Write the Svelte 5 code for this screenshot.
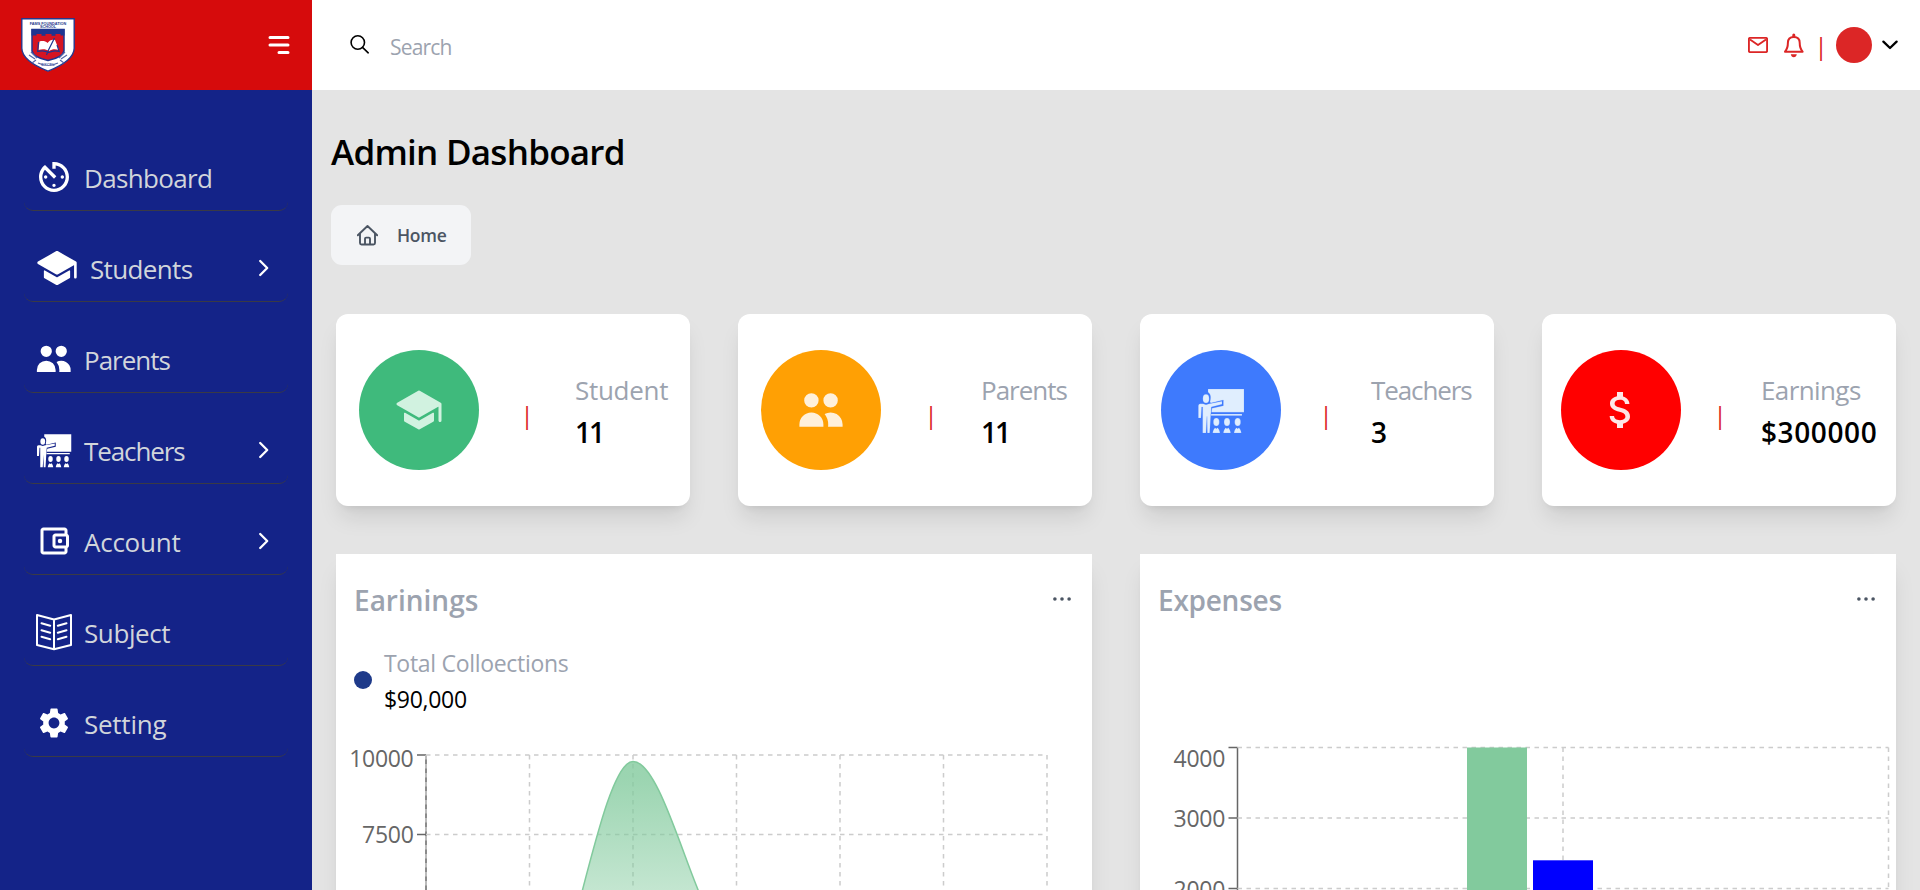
<script>
  const nav = [
    { label: 'Dashboard', icon: 'timer' },
    { label: 'Students', icon: 'school', more: true },
    { label: 'Parents', icon: 'users' },
    { label: 'Teachers', icon: 'teacher', more: true },
    { label: 'Account', icon: 'wallet', more: true },
    { label: 'Subject', icon: 'book' },
    { label: 'Setting', icon: 'gear' }
  ];
  const stats = [
    { label: 'Student', value: '11', icon: 'school', kind: 'green' },
    { label: 'Parents', value: '11', icon: 'users', kind: 'orange' },
    { label: 'Teachers', value: '3', icon: 'teacher', kind: 'blue' },
    { label: 'Earnings', value: '$300000', icon: 'dollar', kind: 'red' }
  ];
  const monthLines = [426, 529.5, 633, 736.5, 840, 943.5, 1047];
</script>

{#snippet icon(name)}
  {#if name === 'timer'}
    <svg class="ic timer" viewBox="0 0 24 24"><path d="M11 17c0 .55.45 1 1 1s1-.45 1-1-.45-1-1-1-1 .45-1 1zm0-14v4h2V5.08c3.39.49 6 3.39 6 6.92 0 3.87-3.13 7-7 7s-7-3.13-7-7c0-1.68.59-3.22 1.58-4.42L12 13l1.41-1.41-6.8-6.8v.02C4.42 6.45 3 9.05 3 12c0 4.97 4.02 9 9 9 4.97 0 9-4.03 9-9s-4.03-9-9-9h-1zm7 9c0-.55-.45-1-1-1s-1 .45-1 1 .45 1 1 1 1-.45 1-1zM6 12c0 .55.45 1 1 1s1-.45 1-1-.45-1-1-1-1 .45-1 1z" /></svg>
  {:else if name === 'school'}
    <svg class="ic school" viewBox="0 0 512 512"><path d="M256 368a16 16 0 0 1-7.94-2.11L108 285.84a8 8 0 0 0-12 6.94V368a16 16 0 0 0 8.23 14l144 80a16 16 0 0 0 15.54 0l144-80A16 16 0 0 0 416 368v-75.22a8 8 0 0 0-12-6.94l-140.06 80.05A16 16 0 0 1 256 368z" /><path d="M495.92 190.5v-.11a16 16 0 0 0-8-12.28l-224-128a16 16 0 0 0-15.88 0l-224 128a16 16 0 0 0 0 27.78l224 128a16 16 0 0 0 15.88 0L461 221.28a2 2 0 0 1 3 1.74v144.53c0 8.61 6.62 16 15.23 16.43A16 16 0 0 0 496 368V192a14.76 14.76 0 0 0-.08-1.5z" /></svg>
  {:else if name === 'users'}
    <svg class="ic users" viewBox="0 0 20 20"><path d="M9 6a3 3 0 11-6 0 3 3 0 016 0zM17 6a3 3 0 11-6 0 3 3 0 016 0zM12.93 17c.046-.327.07-.66.07-1a6.97 6.97 0 00-1.5-4.33A5 5 0 0119 16v1h-6.07zM6 11a5 5 0 015 5v1H1v-1a5 5 0 015-5z" /></svg>
  {:else if name === 'teacher'}
    <svg class="ic" viewBox="0 0 144 144">
      <path d="M33 9h108v70H43l2-12 34-8V42l-37 9c-2-1-3-2-3-4 3-11 3-23-6-28z" />
      <path d="M42 84h93v5H42z" />
      <ellipse cx="27" cy="38" rx="9.5" ry="13" />
      <path d="M10 53h8l9 3 10-3 38-7v9l-32 8-2 29-3 49h-7l-1-50-3 50H17V63h-3l-2 33H4V60c0-4 2-7 6-7z" />
      <ellipse cx="58" cy="108" rx="9" ry="12" /><ellipse cx="90" cy="108" rx="9" ry="12" /><ellipse cx="122" cy="108" rx="9" ry="12" />
      <path d="M47 141c1-8 4-13 7-16l4 3 4-3c3 3 6 8 7 16zM79 141c1-8 4-13 7-16l4 3 4-3c3 3 6 8 7 16zM111 141c1-8 4-13 7-16l4 3 4-3c3 3 6 8 7 16z" />
    </svg>
  {:else if name === 'wallet'}
    <svg class="ic" viewBox="0 0 24 24"><path d="M21 7.28V5c0-1.1-.9-2-2-2H5c-1.11 0-2 .9-2 2v14c0 1.1.89 2 2 2h14c1.1 0 2-.9 2-2v-2.28c.59-.35 1-.98 1-1.72V9c0-.74-.41-1.37-1-1.72zM20 9v6h-7V9h7zM5 19V5h14v2h-6c-1.1 0-2 .9-2 2v6c0 1.1.9 2 2 2h6v2H5z" /><circle cx="16" cy="12" r="1.5" /></svg>
  {:else if name === 'book'}
    <svg class="ic line" viewBox="0 0 36 36"><path d="M1 1l17 4.500L35 1v30l-17 4.200L1 31zM18 5.500v29.700M5.500 9.200l8.700 2.500M5.500 16.200l8.700 2.500M5.500 22.800l8.700 2.500M30.500 9.200l-8.700 2.500M30.500 16.200l-8.700 2.500M30.500 22.800l-8.700 2.500" /></svg>
  {:else if name === 'gear'}
    <svg class="ic" viewBox="0 0 24 24"><path d="M19.14 12.94c.04-.3.06-.61.06-.94 0-.32-.02-.64-.07-.94l2.03-1.58c.18-.14.23-.41.12-.61l-1.92-3.32c-.12-.22-.37-.29-.59-.22l-2.39.96c-.5-.38-1.03-.7-1.62-.94L14.4 2.81c-.04-.24-.24-.41-.48-.41h-3.84c-.24 0-.43.17-.47.41L9.25 5.35C8.66 5.59 8.12 5.92 7.63 6.29L5.24 5.33c-.22-.08-.47 0-.59.22L2.74 8.87c-.12.21-.08.47.12.61l2.03 1.58c-.05.3-.09.63-.09.94s.02.64.07.94l-2.03 1.58c-.18.14-.23.41-.12.61l1.92 3.32c.12.22.37.29.59.22l2.39-.96c.5.38 1.03.7 1.62.94l.36 2.54c.05.24.24.41.48.41h3.84c.24 0 .44-.17.47-.41l.36-2.54c.59-.24 1.13-.56 1.62-.94l2.39.96c.22.08.47 0 .59-.22l1.92-3.32c.12-.22.07-.47-.12-.61l-2.01-1.58zM12 15.6c-1.98 0-3.6-1.62-3.6-3.6s1.62-3.6 3.6-3.6 3.6 1.62 3.6 3.6-1.62 3.6-3.6 3.6z" /></svg>
  {:else if name === 'dollar'}
    <svg class="ic" viewBox="0 0 24 24"><path d="M11.8 10.9c-2.27-.59-3-1.2-3-2.15 0-1.09 1.01-1.85 2.7-1.85 1.78 0 2.44.85 2.5 2.1h2.21c-.07-1.72-1.12-3.3-3.21-3.81V3h-3v2.16c-1.94.42-3.5 1.68-3.5 3.61 0 2.31 1.91 3.46 4.7 4.13 2.5.6 3 1.48 3 2.41 0 .69-.49 1.79-2.7 1.79-2.06 0-2.87-.92-2.98-2.1h-2.2c.12 2.19 1.76 3.42 3.68 3.83V21h3v-2.15c1.95-.37 3.5-1.5 3.5-3.55 0-2.84-2.43-3.81-4.7-4.4z" /></svg>
  {/if}
{/snippet}

{#snippet dots()}
  <svg class="dots" viewBox="0 0 18 6"><circle cx="1.9" cy="3" r="1.8" /><circle cx="9" cy="3" r="1.8" /><circle cx="16.1" cy="3" r="1.8" /></svg>
{/snippet}

<div class="app">
  <aside>
    <div class="brand">
      <svg class="logo" viewBox="0 0 54 54">
        <path d="M.8.8h52.4v29.5C53 41 40 48 27 53.2 14 48 1 41 .8 30.3z" fill="#fff" stroke="#26378c" stroke-width="1.4" />
        <path d="M11 11.5h32v21.5c-1 5-9 8-16 9.500-7-1.500-15-4.500-16-9.500z" fill="#d51422" stroke="#1f3590" stroke-width="1.5" />
        <path d="M10.500 11h33v6.500h-4V16h-5v1.800h-4V16h-6v1.800h-4V16h-5v1.500h-5z" fill="#1f3590" />
        <path d="M18.500 23.500c3-1 6-.5 8 1.500 2-3 5-4 7.500-3l4 10c-4-1.500-7-1-10 1-3-2-7-2-10.500-1z" fill="#fff" />
        <path d="M17.500 24l-.8 9.500c4-1 8-.5 11 1 3-1.500 7-2 10.500-1L36 27M33.500 20l-6 12-2 5" fill="none" stroke="#1f3590" stroke-width="1.2" />
        <path d="M8 37l6 4M10 34l6 6M46 37l-6 4M44 34l-6 6M17 45c6 3 14 3 20 0M15 42l-4 3M39 42l4 3" fill="none" stroke="#5868aa" stroke-width="1.2" />
        <text x="27" y="6.500" text-anchor="middle">FAMS FOUNDATION</text>
        <text x="27" y="10" text-anchor="middle">SCHOOL</text>
        <text class="motto" x="27" y="48" text-anchor="middle">EXCEL</text>
      </svg>
      <svg class="burger" viewBox="0 0 20 20"><path d="M3 5a1 1 0 011-1h12a1 1 0 110 2H4a1 1 0 01-1-1zM3 10a1 1 0 011-1h12a1 1 0 110 2H4a1 1 0 01-1-1zM9 15a1 1 0 011-1h6a1 1 0 110 2h-6a1 1 0 01-1-1z" /></svg>
    </div>
    <nav>
      {#each nav as item}
        <div class="item {item.icon}-item">
          {@render icon(item.icon)}
          <span>{item.label}</span>
          {#if item.more}
            <svg class="more" viewBox="0 0 12 18"><path d="M2.200 2l7 7-7 7" /></svg>
          {/if}
        </div>
      {/each}
    </nav>
  </aside>

  <div class="page">
    <header>
      <svg class="search" viewBox="0 0 19 19"><circle cx="7.800" cy="7.500" r="6.700" /><path d="M12.500 12.300l5.700 5.500" /></svg>
      <input placeholder="Search" />
      <svg class="mail" viewBox="0 0 20 16"><rect x=".9" y=".9" width="18.200" height="14.200" rx="1.300" /><path d="M2 2.500l8 5.500 8-5.500" /></svg>
      <svg class="bell" viewBox="0 0 22 25"><path class="o" d="M10.800 4C7.200 4 4.900 6.200 4.900 9.800c0 4.500-.9 6.700-2.900 8.900h17.600c-2-2.200-2.900-4.400-2.900-8.900C16.700 6.200 14.400 4 10.800 4z" /><path d="M9.300 4V2a1.500 1.500 0 013 0v2zM7.800 21.300h6c-.3 1.900-1.500 2.900-3 2.900s-2.700-1-3-2.900z" /></svg>
      <span class="bar">|</span>
      <span class="avatar"></span>
      <svg class="down" viewBox="0 0 16 10"><path d="M1.400 1.600L8 8l6.600-6.400" /></svg>
    </header>

    <main>
      <h1>Admin Dashboard</h1>
      <button class="home">
        <svg viewBox="0 0 21 21"><path d="M.8 10.300L10.500 1l9.700 9.300M3 8.600V18c0 .9.600 1.500 1.500 1.500h12c.9 0 1.500-.6 1.500-1.500V8.600M8 19v-5.300c0-.7.400-1.100 1.100-1.100h2.800c.7 0 1.100.4 1.100 1.100V19" /></svg>
        Home
      </button>

      <section class="stats">
        {#each stats as s}
          <div class="stat {s.kind}">
            <div class="disc">{@render icon(s.icon)}</div>
            <span class="bar">|</span>
            <div class="figures">
              <span class="label">{s.label}</span>
              <span class="value">{s.value}</span>
            </div>
          </div>
        {/each}
      </section>

      <section class="charts">
        <div class="chart">
          <div class="head"><h2>Earinings</h2>{@render dots()}</div>
          <div class="total">
            <i></i>
            <div><span>Total Colloections</span><b>$90,000</b></div>
          </div>
          <svg class="plot" viewBox="336 717 756 173">
            <defs>
              <linearGradient id="fade" gradientUnits="userSpaceOnUse" x1="0" x2="0" y1="761.4" y2="1072.5">
                <stop offset="5%" stop-color="#82ca9d" stop-opacity=".8" />
                <stop offset="95%" stop-color="#82ca9d" stop-opacity="0" />
              </linearGradient>
            </defs>
            <path class="axis" d="M426 755V890M417 755H426M417 834.400H426" />
            <g class="grid">
              <path d="M426 755H1047" /><path d="M426 834.400H1047" />
              {#each monthLines as x}<path d="M{x} 755V890" />{/each}
            </g>
            <path d="M529.500 1028.100C564 1028.100 598.500 761.400 633 761.400S702 948.400 736.500 948.400V1072.500H529.500Z" fill="url(#fade)" />
            <path d="M529.500 1028.100C564 1028.100 598.500 761.400 633 761.400S702 948.400 736.500 948.400" fill="none" stroke="#82ca9d" stroke-width="1.5" />
            <text x="413.500" y="767.300">10000</text>
            <text x="413.500" y="842.800">7500</text>
          </svg>
        </div>

        <div class="chart">
          <div class="head"><h2 class="expenses">Expenses</h2>{@render dots()}</div>
          <div class="gap"></div>
          <svg class="plot" viewBox="1140 717 756 173">
            <path class="axis" d="M1237.500 747.500V890M1228.500 747.500H1237.500M1228.500 818H1237.500M1228.500 888.500H1237.500" />
            <g class="grid">
              <path d="M1237.500 747.500H1888.500" /><path d="M1237.500 818H1888.500" /><path d="M1237.500 888.500H1888.500" />
              <path d="M1563 747.500V890" /><path d="M1888.500 747.500V890" />
            </g>
            <rect x="1467" y="747.500" width="60" height="143" fill="#82ca9d" />
            <rect x="1533" y="860.300" width="60" height="30" fill="#00f" />
            <text x="1225" y="767.300">4000</text>
            <text x="1225" y="826.800">3000</text>
            <text x="1225" y="897.500">2000</text>
          </svg>
        </div>
      </section>
    </main>
  </div>
</div>

<style>
  :global(body) { margin: 0; overflow: hidden; }
  * { box-sizing: border-box; }
  .app {
    display: flex; height: 890px; overflow: hidden; background: #e4e4e4; color: #000;
    font-family: "Open Sans", "Noto Sans", sans-serif; letter-spacing: -0.018em;
  }
  svg { display: block; flex: none; }

  aside { width: 312px; flex: none; background: #142388; }
  .brand { height: 90px; background: #d60b0c; display: flex; align-items: center; justify-content: space-between; padding: 0 18px 0 21px; }
  .logo { width: 54px; height: 54px; }
  .logo text { font: 700 3.8px "Liberation Sans", sans-serif; fill: #26378c; letter-spacing: 0; }
  .logo text.motto { font-size: 4px; fill: #5868aa; }
  .burger { width: 30px; height: 30px; fill: #fff; }
  nav { padding: 53px 24px 0; display: flex; flex-direction: column; gap: 23px; }
  .item {
    height: 68px; display: flex; align-items: center; padding: 1px 18px 0 12px;
    border-bottom: 1px solid #3a3a45; border-radius: 9px; color: #d1d5db; font-size: 26px; letter-spacing: -.65px;
  }
  .item span { margin: 2px 0 0 12px; flex: 1; line-height: 36px; }
  .users-item { letter-spacing: -1px; }
  .teacher-item { letter-spacing: -1.1px; }
  .wallet-item, .gear-item { letter-spacing: -.25px; }
  .book-item { letter-spacing: -.4px; }
  .ic { width: 36px; height: 36px; fill: #fff; }
  .ic.line { fill: none; stroke: #fff; stroke-width: 2; stroke-linejoin: round; stroke-linecap: round; overflow: visible; }
  .item .timer { width: 40px; height: 40px; margin: 0 -2px; }
  .item .school { width: 42px; height: 42px; }
  .item .users { width: 37.5px; height: 37.5px; margin: 0 -.75px; }
  .more { width: 12px; height: 18px; fill: none; stroke: #fff; stroke-width: 2.3; stroke-linecap: round; stroke-linejoin: round; }

  .page { flex: 1; min-width: 0; }
  header { height: 90px; background: #fff; display: flex; align-items: center; padding: 0 22px 0 39px; }
  .search { width: 19px; height: 19px; margin-top: -1px; margin-left: -1px; fill: none; stroke: #000; stroke-width: 1.6; stroke-linecap: round; }
  input { border: 0; outline: 0; padding: 0; margin: 3px 0 0 21px; flex: 1; font: 21px/30px "Open Sans", sans-serif; letter-spacing: -.8px; background: none; }
  input::placeholder { color: #9ca3af; opacity: 1; }
  .mail { width: 20px; height: 16px; fill: none; stroke: #dc2626; stroke-width: 1.9; stroke-linejoin: round; }
  .bell { width: 22px; height: 25px; margin-left: 15px; fill: #dc2626; }
  .bell .o { fill: none; stroke: #dc2626; stroke-width: 2; stroke-linejoin: round; }
  .bar { color: #dc2626; font-size: 24px; line-height: 36px; width: 12px; display: flex; justify-content: center; letter-spacing: 0; }
  header .bar { margin: 2px 9px 0 10px; }
  .avatar { width: 36px; height: 36px; border-radius: 50%; background: #dc2626; }
  .down { width: 16px; height: 10px; margin-left: 10px; fill: none; stroke: #000; stroke-width: 2.3; stroke-linecap: round; stroke-linejoin: round; }

  main { padding: 36px 24px 0 19px; }
  h1 { margin: 0; font-size: 35px; line-height: 52px; font-weight: 600; letter-spacing: -.75px; }
  .home {
    margin-top: 27px; width: 140px; height: 60px; border: 0; border-radius: 11px; background: #f3f4f6;
    display: flex; align-items: center; gap: 19px; padding: 0 0 0 26px; color: #4b5563;
    font: 600 17.500px "Open Sans", sans-serif; letter-spacing: -.3px;
  }
  .home svg { width: 21px; height: 21px; fill: none; stroke: #4b5563; stroke-width: 1.9; stroke-linejoin: round; stroke-linecap: round; }

  .stats { margin: 49px 0 0 5px; display: grid; grid-template-columns: repeat(4, 354px); gap: 48px; }
  .stat, .chart { background: #fff; box-shadow: 0 15px 22.500px -4.500px rgba(0, 0, 0, .1), 0 6px 9px -6px rgba(0, 0, 0, .1); }
  .stat { height: 192px; border-radius: 12px; display: flex; align-items: center; }
  .disc { width: 120px; height: 120px; border-radius: 50%; flex: none; display: flex; align-items: center; justify-content: center; }
  .disc .ic { width: 48px; height: 48px; }
  .stat .bar { flex: none; margin-top: 9px; }
  .figures { display: flex; flex-direction: column; padding-top: 4px; }
  .label { font-size: 26px; line-height: 40px; color: #9ca3af; }
  .value { font-size: 28px; line-height: 44px; font-weight: 600; letter-spacing: -2px; }
  .green .disc { margin-left: 23px; background: #3fba7c; }
  .green .ic { fill: #d1f2e0; }
  .green .bar { margin-left: 42px; margin-right: 42px; }
  .orange .disc { margin-left: 23px; background: #ffa004; }
  .orange .ic { fill: #fff0da; }
  .orange .bar { margin-left: 44px; margin-right: 44px; }
  .orange .label { letter-spacing: -1px; }
  .blue .disc { margin-left: 21px; background: #3e7afd; }
  .blue .ic { fill: #e0eefe; stroke: #3e7afd; stroke-width: .5; }
  .blue .bar { margin-left: 39px; margin-right: 39px; }
  .blue .label { letter-spacing: -1.100px; }
  .red .disc { margin-left: 19px; background: #f00; }
  .red .ic { fill: #fee6e6; }
  .red .bar { margin-left: 33px; margin-right: 35px; }
  .red .label { letter-spacing: -.6px; }
  .red .value { letter-spacing: .6px; }

  .charts { margin: 48px 0 0 5px; display: grid; grid-template-columns: repeat(2, 756px); gap: 48px; }
  .chart { height: 540px; }
  .head { height: 68px; padding: 24px 21px 0 18px; display: flex; align-items: center; justify-content: space-between; }
  h2 { margin: 0; font-size: 28px; line-height: 44px; font-weight: 600; color: #9ca3af; letter-spacing: 0; }
  h2.expenses { letter-spacing: -.25px; }
  .dots { width: 18px; height: 6px; margin-top: -2px; fill: #4b5563; }
  .total { margin-top: 23px; height: 72px; padding-left: 18px; display: flex; align-items: center; gap: 12px; }
  .total i { width: 18px; height: 18px; margin-top: -2px; border-radius: 50%; background: #1e3a8a; }
  .total div { display: flex; flex-direction: column; font-size: 23px; line-height: 36px; }
  .total span { color: #9ca3af; letter-spacing: -.3px; }
  .total b { font-weight: 400; }
  .gap { height: 95px; }
  .plot { width: 756px; height: 173px; }
  .plot text { font-size: 23px; fill: #666; text-anchor: end; }
  .axis { fill: none; stroke: #666; stroke-width: 1.5; }
  .grid { fill: none; stroke: #ccc; stroke-width: 1.5; stroke-dasharray: 4.5 4.5; }
</style>
